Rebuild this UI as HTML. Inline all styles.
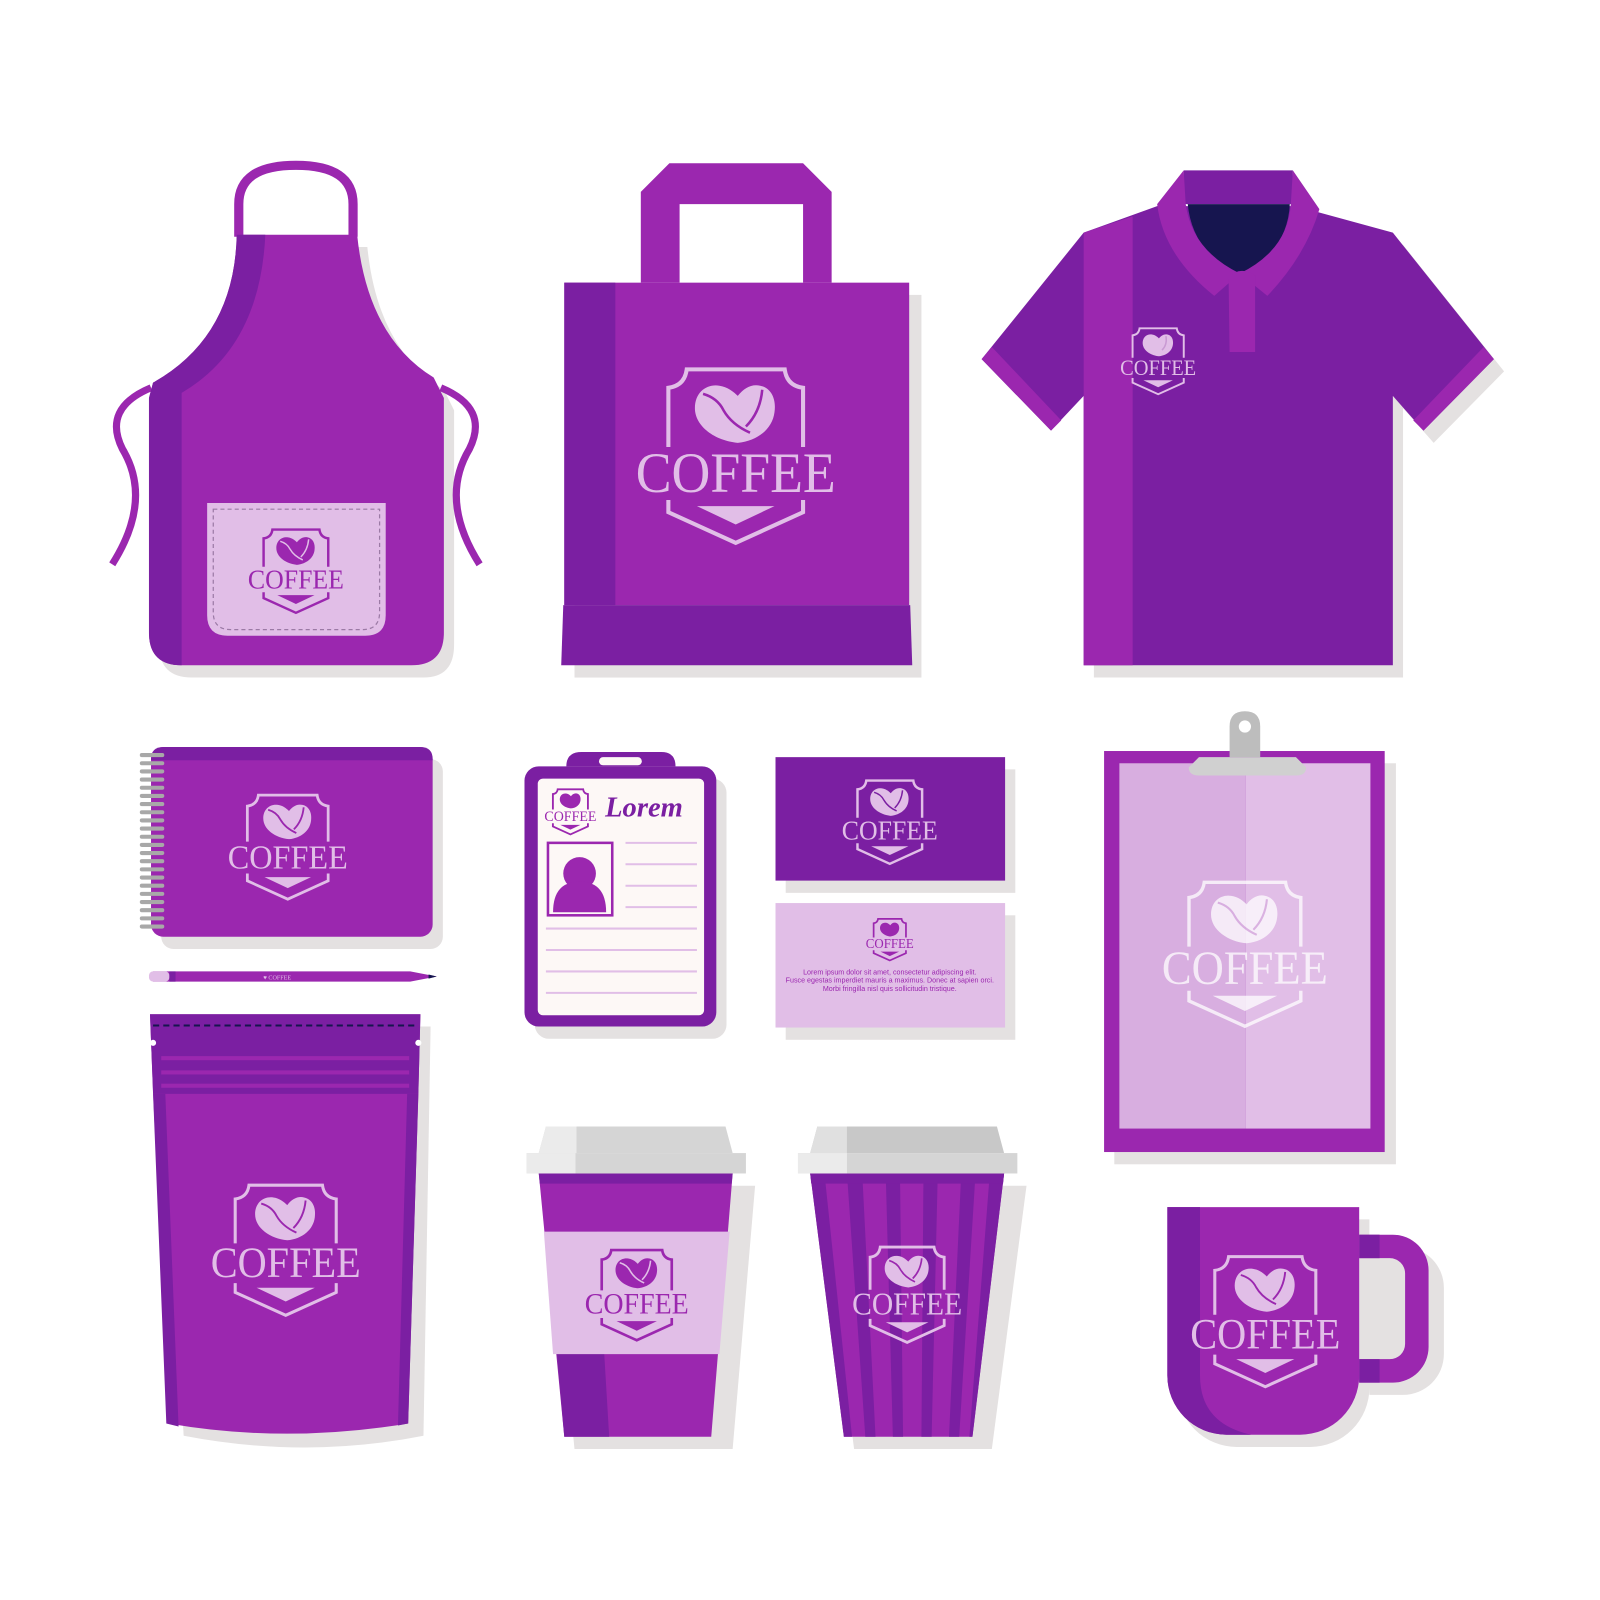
<!DOCTYPE html>
<html><head><meta charset="utf-8"><style>html,body{margin:0;padding:0;background:#fff}svg{display:block}</style></head>
<body>
<svg width="1600" height="1600" viewBox="0 0 1568 1568" xmlns="http://www.w3.org/2000/svg">
<!-- shadows -->
<g fill="#E4E1E1">
<path d="M160,387 Q240,342 242,242 L360,242 Q370,342 435,382 L445,402 L445,632 Q445,664 415,664 L188,664 Q156,664 156,632 Z"/>
<rect x="563" y="289" width="340" height="375"/>
<path d="M1072,240 L1144,214 L1280,214 L1375,240 L1474,364 L1405,434 L1375,400 L1375,664 L1072,664 Z"/>
<rect x="158" y="744" width="276" height="186" rx="12"/>
<rect x="524" y="763" width="188" height="255" rx="14"/>
<rect x="770" y="754" width="225" height="121"/>
<rect x="770" y="897" width="225" height="122"/>
<rect x="1092" y="748" width="276" height="393"/>
<path d="M157,1006 L422,1006 L415,1407 Q300,1430 180,1407 Z"/>
<path d="M538,1162 L740,1162 L718,1420 L563,1420 Z"/>
<path d="M804,1162 L1006,1162 L972,1420 L837,1420 Z"/>
<path d="M1154,1195 L1342,1195 L1342,1222 L1375,1222 A40,40 0 0 1 1415,1262 L1415,1327 A40,40 0 0 1 1375,1367 L1342,1367 L1342,1360 A58,58 0 0 1 1284,1418 L1212,1418 A58,58 0 0 1 1154,1360 Z"/>
</g>
<!-- APRON -->
<path d="M110,553 Q150,490 120,440 Q100,400 148,380" fill="none" stroke="#9B27AF" stroke-width="7"/>
<path d="M470,553 Q430,490 460,440 Q480,400 432,380" fill="none" stroke="#9B27AF" stroke-width="7"/>
<path d="M234,232 L234,200 Q234,162 290,162 Q346,162 346,200 L346,232" fill="none" stroke="#9B27AF" stroke-width="9"/>
<path d="M150,375 Q230,330 232,230 L350,230 Q360,330 425,370 L435,390 L435,620 Q435,652 403,652 L178,652 Q146,652 146,620 L146,390 Z" fill="#9B27AF"/>
<path d="M150,375 Q230,330 232,230 L260,230 Q255,340 178,385 L178,652 Q146,652 146,620 L146,390 Z" fill="#7B1FA2"/>
<path d="M203,493 L378,493 L378,603 Q378,623 358,623 L223,623 Q203,623 203,603 Z" fill="#E1BEE7"/>
<path d="M209,499 L372,499 L372,600 Q372,617 355,617 L226,617 Q209,617 209,600 Z" fill="none" stroke="#9B7AA5" stroke-width="1.2" stroke-dasharray="4 3"/>
<!-- BAG -->
<path d="M628,188 L656,160 L787,160 L815,188 L815,277 L787,277 L787,200 L666,200 L666,277 L628,277 Z" fill="#9B27AF"/>
<rect x="553" y="277" width="338" height="316" fill="#9B27AF"/>
<rect x="553" y="277" width="50" height="316" fill="#7B1FA2"/>
<path d="M552,593 L892,593 L894,652 L550,652 Z" fill="#7B1FA2"/>
<!-- POLO -->
<path d="M1062,228 L1134,202 L1270,202 L1365,228 L1464,352 L1395,422 L1365,388 L1365,652 L1062,652 L1062,388 L1030,422 L962,352 Z" fill="#7B1FA2"/>
<path d="M1062,228 L1110,212 L1110,652 L1062,652 Z" fill="#9B27AF"/>
<path d="M962,352 L972,340 L1040,412 L1030,422 Z" fill="#9B27AF"/>
<path d="M1464,352 L1454,340 L1385,412 L1395,422 Z" fill="#9B27AF"/>
<path d="M1160,167 L1267,167 L1267,200 L1160,200 Z" fill="#7B1FA2"/>
<path d="M1164,200 L1264,200 Q1262,245 1215,275 Q1168,245 1164,200 Z" fill="#16154F"/>
<path d="M1160,167 L1134,200 Q1140,250 1190,290 L1215,268 Q1168,245 1162,200 Z" fill="#9B27AF"/>
<path d="M1267,167 L1293,205 Q1280,250 1242,290 L1215,268 Q1262,245 1265,200 Z" fill="#9B27AF"/>
<path d="M1204,272 Q1215,260 1230,270 L1230,345 L1205,345 Z" fill="#9B27AF"/>
<!-- NOTEBOOK -->
<rect x="148" y="732" width="276" height="186" rx="12" fill="#9B27AF"/>
<path d="M148,744 Q148,732 160,732 L412,732 Q424,732 424,744 L424,745 L148,745 Z" fill="#7B1FA2"/>
<g stroke="#A8A8A8" stroke-width="4" stroke-linecap="round">
<path d="M139,740h20M139,748h20M139,756h20M139,764h20M139,772h20M139,780h20M139,788h20M139,796h20M139,804h20M139,812h20M139,820h20M139,828h20M139,836h20M139,844h20M139,852h20M139,860h20M139,868h20M139,876h20M139,884h20M139,892h20M139,900h20M139,908h20"/>
</g>
<!-- PENCIL -->
<path d="M150,952 L402,952 L428,957 L402,962 L150,962 Q145,957 150,952 Z" fill="#9B27AF"/>
<rect x="146" y="952" width="20" height="10" rx="4" fill="#E1BEE7"/>
<rect x="166" y="952" width="6" height="10" fill="#7B1FA2"/>
<path d="M420,955 L428,957 L420,959Z" fill="#16154F"/>
<text x="258" y="960" font-family="Liberation Serif,serif" font-size="6" fill="#E1BEE7">♥ COFFEE</text>
<!-- POUCH -->
<path d="M147,994 L412,994 L410,1070 L400,1395 Q280,1415 165,1395 L150,1070 Z" fill="#9B27AF"/>
<path d="M147,994 L412,994 L410,1072 L150,1072 Z" fill="#7B1FA2"/>
<path d="M150,1072 L163,1395 L175,1398 L162,1072 Z M410,1072 L400,1395 L390,1397 L399,1072 Z" fill="#7B1FA2"/>
<path d="M150,1005 L410,1005" stroke="#16154F" stroke-width="2" stroke-dasharray="6 4"/>
<g fill="#9B27AF"><rect x="158" y="1035" width="243" height="4"/><rect x="158" y="1049" width="243" height="4"/><rect x="158" y="1062" width="243" height="4"/></g>
<circle cx="150" cy="1022" r="3" fill="#fff"/><circle cx="410" cy="1022" r="3" fill="#fff"/>
<!-- ID -->
<path d="M555,751 Q555,737 570,737 L648,737 Q662,737 662,751 Z" fill="#7B1FA2"/>
<rect x="514" y="751" width="188" height="255" rx="14" fill="#7B1FA2"/>
<rect x="587" y="742" width="42" height="8" rx="4" fill="#FDF8F6"/>
<rect x="527" y="763" width="163" height="232" rx="5" fill="#FDF8F6"/>
<rect x="537" y="826" width="63" height="71" fill="none" stroke="#9B27AF" stroke-width="2.5"/>
<circle cx="568" cy="856" r="16" fill="#9B27AF"/>
<path d="M542,894 Q542,864 568,864 Q594,864 594,894 Z" fill="#9B27AF"/>
<g stroke="#E1BEE7" stroke-width="2"><path d="M613,826h70M613,847h70M613,868h70M613,889h70M535,910h148M535,931h148M535,952h148M535,973h148"/></g>
<text x="593" y="800" font-family="Liberation Serif,serif" font-style="italic" font-weight="bold" font-size="28" fill="#7B1FA2">Lorem</text>
<!-- CARDS -->
<rect x="760" y="742" width="225" height="121" fill="#7B1FA2"/>
<rect x="760" y="885" width="225" height="122" fill="#E1BEE7"/>
<g font-family="Liberation Sans,sans-serif" font-size="7" fill="#9B27AF" text-anchor="middle">
<text x="872" y="955">Lorem ipsum dolor sit amet, consectetur adipiscing elit.</text>
<text x="872" y="963">Fusce egestas imperdiet mauris a maximus. Donec at sapien orci.</text>
<text x="872" y="971">Morbi fringilla nisl quis sollicitudin tristique.</text>
</g>
<!-- CLIPBOARD -->
<rect x="1082" y="736" width="275" height="393" fill="#9B27AF"/>
<rect x="1097" y="748" width="124" height="358" fill="#D8AEE0"/>
<rect x="1221" y="748" width="122" height="358" fill="#E1BEE7"/>
<path d="M1165,752 L1175,742 L1270,742 L1280,752 Q1280,760 1270,760 L1175,760 Q1165,760 1165,752Z" fill="#D0D0D0"/>
<path d="M1205,742 L1205,712 Q1205,697 1220,697 Q1235,697 1235,712 L1235,742 Z" fill="#BDBDBD"/>
<circle cx="1220" cy="712" r="6" fill="#fff"/>
<!-- CUP 1 -->
<path d="M528,1150 L718,1150 L697,1408 L553,1408 Z" fill="#9B27AF"/>
<path d="M528,1150 L718,1150 L717,1160 L529,1160 Z" fill="#7B1FA2"/>
<path d="M535,1207 L553,1408 L597,1408 L585,1207 Z" fill="#7B1FA2"/>
<path d="M533,1207 L715,1207 L705,1327 L542,1327 Z" fill="#E1BEE7"/>
<path d="M535,1104 L711,1104 L718,1130 L528,1130 Z" fill="#D5D5D5"/>
<path d="M535,1104 L565,1104 L565,1130 L528,1130 Z" fill="#EBEBEB"/>
<rect x="516" y="1130" width="215" height="20" fill="#D5D5D5"/>
<rect x="516" y="1130" width="48" height="20" fill="#EBEBEB"/>
<!-- CUP 2 -->
<path d="M794,1150 L984,1150 L953,1408 L827,1408 Z" fill="#9B27AF"/>
<g fill="#7B1FA2">
<path d="M794,1150 L808,1150 L835,1408 L827,1408 Z"/>
<path d="M830,1150 L845,1150 L858,1408 L848,1408 Z"/>
<path d="M868,1150 L882,1150 L885,1408 L875,1408 Z"/>
<path d="M905,1150 L919,1150 L913,1408 L903,1408 Z"/>
<path d="M942,1150 L956,1150 L940,1408 L930,1408 Z"/>
<path d="M970,1150 L984,1150 L953,1408 L950,1408 Z"/>
<path d="M794,1150 L984,1150 L983,1160 L795,1160 Z"/>
</g>
<path d="M801,1104 L977,1104 L984,1130 L794,1130 Z" fill="#C8C8C8"/>
<path d="M801,1104 L830,1104 L830,1130 L794,1130 Z" fill="#E0E0E0"/>
<rect x="782" y="1130" width="215" height="20" fill="#D5D5D5"/>
<rect x="782" y="1130" width="48" height="20" fill="#EBEBEB"/>
<!-- MUG -->
<path d="M1332,1210 L1365,1210 A35,35 0 0 1 1400,1245 L1400,1320 A35,35 0 0 1 1365,1355 L1332,1355 L1332,1332 L1362,1332 A15,15 0 0 0 1377,1317 L1377,1248 A15,15 0 0 0 1362,1233 L1332,1233 Z" fill="#9B27AF"/>
<rect x="1332" y="1210" width="20" height="23" fill="#7B1FA2"/><rect x="1332" y="1332" width="20" height="23" fill="#7B1FA2"/>
<path d="M1144,1183 L1332,1183 L1332,1348 A58,58 0 0 1 1274,1406 L1202,1406 A58,58 0 0 1 1144,1348 Z" fill="#9B27AF"/>
<path d="M1144,1183 L1176,1183 L1176,1348 Q1176,1395 1226,1406 L1202,1406 A58,58 0 0 1 1144,1348 Z" fill="#7B1FA2"/>

<!-- LOGOS -->
<g font-family="Liberation Serif,serif" text-anchor="middle">
<g transform="translate(721,360) scale(1)"><g fill="none" stroke="#E1BEE7" stroke-width="4"><path d="M-66,78 L-66,20 Q-50,18 -48,2 L48,2 Q50,18 66,20 L66,78"/><path d="M-66,130 L-66,142 L0,172 L66,142 L66,130"/></g><path d="M-38,136 L38,136 L0,154 Z" fill="#E1BEE7"/><path d="M2,74 C-20,72 -40,58 -40,40 C-40,24 -28,16 -16,18 C-8,19 -2,24 2,28 C8,20 16,16 24,18 C34,20 40,30 38,44 C36,60 22,72 2,74 Z" fill="#E1BEE7"/><path d="M-32,26 Q-18,30 -12,42 Q-4,56 14,64 M10,58 Q24,44 26,22" fill="none" stroke="#9B27AF" stroke-width="2.5"/><text x="0" y="122" font-size="56" fill="#E1BEE7" textLength="196" lengthAdjust="spacingAndGlyphs">COFFEE</text></g>
<g transform="translate(290,518) scale(0.48)"><g fill="none" stroke="#9B27AF" stroke-width="5"><path d="M-66,78 L-66,20 Q-50,18 -48,2 L48,2 Q50,18 66,20 L66,78"/><path d="M-66,130 L-66,142 L0,172 L66,142 L66,130"/></g><path d="M-38,136 L38,136 L0,154 Z" fill="#9B27AF"/><path d="M2,74 C-20,72 -40,58 -40,40 C-40,24 -28,16 -16,18 C-8,19 -2,24 2,28 C8,20 16,16 24,18 C34,20 40,30 38,44 C36,60 22,72 2,74 Z" fill="#9B27AF"/><path d="M-32,26 Q-18,30 -12,42 Q-4,56 14,64 M10,58 Q24,44 26,22" fill="none" stroke="#E1BEE7" stroke-width="3"/><text x="0" y="122" font-size="56" fill="#9B27AF" textLength="196" lengthAdjust="spacingAndGlyphs">COFFEE</text></g>
<g transform="translate(1135,321) scale(0.38)"><g fill="none" stroke="#E1BEE7" stroke-width="5"><path d="M-66,78 L-66,20 Q-50,18 -48,2 L48,2 Q50,18 66,20 L66,78"/><path d="M-66,130 L-66,142 L0,172 L66,142 L66,130"/></g><path d="M-38,136 L38,136 L0,154 Z" fill="#E1BEE7"/><path d="M2,74 C-20,72 -40,58 -40,40 C-40,24 -28,16 -16,18 C-8,19 -2,24 2,28 C8,20 16,16 24,18 C34,20 40,30 38,44 C36,60 22,72 2,74 Z" fill="#E1BEE7"/><path d="M10,58 Q24,44 20,22" fill="none" stroke="#C99AD3" stroke-width="4"/><text x="0" y="122" font-size="56" fill="#E1BEE7" textLength="196" lengthAdjust="spacingAndGlyphs">COFFEE</text></g>
<g transform="translate(282,778) scale(0.6)"><g fill="none" stroke="#E1BEE7" stroke-width="4.5"><path d="M-66,78 L-66,20 Q-50,18 -48,2 L48,2 Q50,18 66,20 L66,78"/><path d="M-66,130 L-66,142 L0,172 L66,142 L66,130"/></g><path d="M-38,136 L38,136 L0,154 Z" fill="#E1BEE7"/><path d="M2,74 C-20,72 -40,58 -40,40 C-40,24 -28,16 -16,18 C-8,19 -2,24 2,28 C8,20 16,16 24,18 C34,20 40,30 38,44 C36,60 22,72 2,74 Z" fill="#E1BEE7"/><path d="M-32,26 Q-18,30 -12,42 Q-4,56 14,64 M10,58 Q24,44 26,22" fill="none" stroke="#9B27AF" stroke-width="3"/><text x="0" y="122" font-size="56" fill="#E1BEE7" textLength="196" lengthAdjust="spacingAndGlyphs">COFFEE</text></g>
<g transform="translate(559,773) scale(0.26)"><g fill="none" stroke="#9B27AF" stroke-width="7"><path d="M-66,78 L-66,20 Q-50,18 -48,2 L48,2 Q50,18 66,20 L66,78"/><path d="M-66,130 L-66,142 L0,172 L66,142 L66,130"/></g><path d="M-38,136 L38,136 L0,154 Z" fill="#9B27AF"/><path d="M2,74 C-20,72 -40,58 -40,40 C-40,24 -28,16 -16,18 C-8,19 -2,24 2,28 C8,20 16,16 24,18 C34,20 40,30 38,44 C36,60 22,72 2,74 Z" fill="#9B27AF"/><text x="0" y="122" font-size="56" fill="#9B27AF" textLength="196" lengthAdjust="spacingAndGlyphs">COFFEE</text></g>
<g transform="translate(872,764) scale(0.48)"><g fill="none" stroke="#E1BEE7" stroke-width="5"><path d="M-66,78 L-66,20 Q-50,18 -48,2 L48,2 Q50,18 66,20 L66,78"/><path d="M-66,130 L-66,142 L0,172 L66,142 L66,130"/></g><path d="M-38,136 L38,136 L0,154 Z" fill="#E1BEE7"/><path d="M2,74 C-20,72 -40,58 -40,40 C-40,24 -28,16 -16,18 C-8,19 -2,24 2,28 C8,20 16,16 24,18 C34,20 40,30 38,44 C36,60 22,72 2,74 Z" fill="#E1BEE7"/><path d="M-32,26 Q-18,30 -12,42 Q-4,56 14,64 M10,58 Q24,44 26,22" fill="none" stroke="#7B1FA2" stroke-width="3"/><text x="0" y="122" font-size="56" fill="#E1BEE7" textLength="196" lengthAdjust="spacingAndGlyphs">COFFEE</text></g>
<g transform="translate(872,900) scale(0.24)"><g fill="none" stroke="#9B27AF" stroke-width="7"><path d="M-66,78 L-66,20 Q-50,18 -48,2 L48,2 Q50,18 66,20 L66,78"/><path d="M-66,130 L-66,142 L0,172 L66,142 L66,130"/></g><path d="M-38,136 L38,136 L0,154 Z" fill="#9B27AF"/><path d="M2,74 C-20,72 -40,58 -40,40 C-40,24 -28,16 -16,18 C-8,19 -2,24 2,28 C8,20 16,16 24,18 C34,20 40,30 38,44 C36,60 22,72 2,74 Z" fill="#9B27AF"/><text x="0" y="122" font-size="56" fill="#9B27AF" textLength="196" lengthAdjust="spacingAndGlyphs">COFFEE</text></g>
<g transform="translate(1220,863) scale(0.83)" opacity="0.75"><g fill="none" stroke="#fff" stroke-width="4"><path d="M-66,78 L-66,20 Q-50,18 -48,2 L48,2 Q50,18 66,20 L66,78"/><path d="M-66,130 L-66,142 L0,172 L66,142 L66,130"/></g><path d="M-38,136 L38,136 L0,154 Z" fill="#fff"/><path d="M2,74 C-20,72 -40,58 -40,40 C-40,24 -28,16 -16,18 C-8,19 -2,24 2,28 C8,20 16,16 24,18 C34,20 40,30 38,44 C36,60 22,72 2,74 Z" fill="#fff"/><path d="M-32,26 Q-18,30 -12,42 Q-4,56 14,64 M10,58 Q24,44 26,22" fill="none" stroke="#D8AEE0" stroke-width="2.5"/><text x="0" y="122" font-size="56" fill="#fff" textLength="196" lengthAdjust="spacingAndGlyphs">COFFEE</text></g>
<g transform="translate(280,1160) scale(0.75)"><g fill="none" stroke="#E1BEE7" stroke-width="4"><path d="M-66,78 L-66,20 Q-50,18 -48,2 L48,2 Q50,18 66,20 L66,78"/><path d="M-66,130 L-66,142 L0,172 L66,142 L66,130"/></g><path d="M-38,136 L38,136 L0,154 Z" fill="#E1BEE7"/><path d="M2,74 C-20,72 -40,58 -40,40 C-40,24 -28,16 -16,18 C-8,19 -2,24 2,28 C8,20 16,16 24,18 C34,20 40,30 38,44 C36,60 22,72 2,74 Z" fill="#E1BEE7"/><path d="M-32,26 Q-18,30 -12,42 Q-4,56 14,64 M10,58 Q24,44 26,22" fill="none" stroke="#9B27AF" stroke-width="2.5"/><text x="0" y="122" font-size="56" fill="#E1BEE7" textLength="196" lengthAdjust="spacingAndGlyphs">COFFEE</text></g>
<g transform="translate(624,1224) scale(0.52)"><g fill="none" stroke="#9B27AF" stroke-width="5"><path d="M-66,78 L-66,20 Q-50,18 -48,2 L48,2 Q50,18 66,20 L66,78"/><path d="M-66,130 L-66,142 L0,172 L66,142 L66,130"/></g><path d="M-38,136 L38,136 L0,154 Z" fill="#9B27AF"/><path d="M2,74 C-20,72 -40,58 -40,40 C-40,24 -28,16 -16,18 C-8,19 -2,24 2,28 C8,20 16,16 24,18 C34,20 40,30 38,44 C36,60 22,72 2,74 Z" fill="#9B27AF"/><path d="M-32,26 Q-18,30 -12,42 Q-4,56 14,64 M10,58 Q24,44 26,22" fill="none" stroke="#E1BEE7" stroke-width="3"/><text x="0" y="122" font-size="56" fill="#9B27AF" textLength="196" lengthAdjust="spacingAndGlyphs">COFFEE</text></g>
<g transform="translate(889,1221) scale(0.55)"><g fill="none" stroke="#E1BEE7" stroke-width="5"><path d="M-66,78 L-66,20 Q-50,18 -48,2 L48,2 Q50,18 66,20 L66,78"/><path d="M-66,130 L-66,142 L0,172 L66,142 L66,130"/></g><path d="M-38,136 L38,136 L0,154 Z" fill="#E1BEE7"/><path d="M2,74 C-20,72 -40,58 -40,40 C-40,24 -28,16 -16,18 C-8,19 -2,24 2,28 C8,20 16,16 24,18 C34,20 40,30 38,44 C36,60 22,72 2,74 Z" fill="#E1BEE7"/><path d="M-32,26 Q-18,30 -12,42 Q-4,56 14,64 M10,58 Q24,44 26,22" fill="none" stroke="#9B27AF" stroke-width="3"/><text x="0" y="122" font-size="56" fill="#E1BEE7" textLength="196" lengthAdjust="spacingAndGlyphs">COFFEE</text></g>
<g transform="translate(1240,1230) scale(0.75)"><g fill="none" stroke="#E1BEE7" stroke-width="4"><path d="M-66,78 L-66,20 Q-50,18 -48,2 L48,2 Q50,18 66,20 L66,78"/><path d="M-66,130 L-66,142 L0,172 L66,142 L66,130"/></g><path d="M-38,136 L38,136 L0,154 Z" fill="#E1BEE7"/><path d="M2,74 C-20,72 -40,58 -40,40 C-40,24 -28,16 -16,18 C-8,19 -2,24 2,28 C8,20 16,16 24,18 C34,20 40,30 38,44 C36,60 22,72 2,74 Z" fill="#E1BEE7"/><path d="M-32,26 Q-18,30 -12,42 Q-4,56 14,64 M10,58 Q24,44 26,22" fill="none" stroke="#9B27AF" stroke-width="2.5"/><text x="0" y="122" font-size="56" fill="#E1BEE7" textLength="196" lengthAdjust="spacingAndGlyphs">COFFEE</text></g>
</g>
</svg>
</body></html>
